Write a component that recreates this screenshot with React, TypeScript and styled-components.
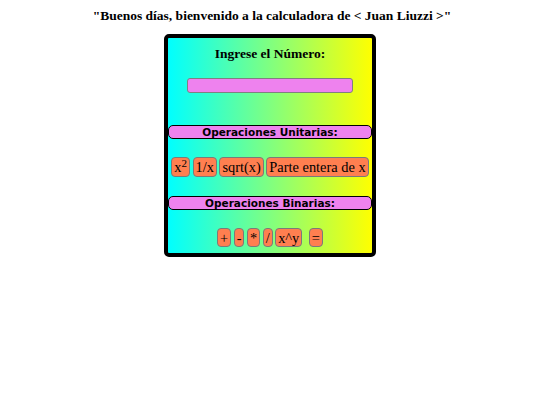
import * as React from 'react';
import styled, { createGlobalStyle } from 'styled-components';

const GlobalStyle = createGlobalStyle`
  html, body {
    margin: 0;
    padding: 0;
    background: #ffffff;
  }
  body {
    font-family: "Liberation Serif", "Times New Roman", serif;
  }
`;

const Page = styled.div`
  display: flex;
  flex-direction: column;
  align-items: center;
  padding-top: 8px;
`;

const Greeting = styled.h3`
  margin: 0;
  font-size: 13.5px;
  line-height: 16px;
  font-weight: bold;
  color: #000;
  transform: translateX(2px);
`;

const Card = styled.div`
  margin-top: 10px;
  width: 204px;
  height: 215px;
  border: 4px solid #000;
  border-radius: 5px;
  background: linear-gradient(to right, #00ffff, #80ff80, #ffff00);
  display: flex;
  flex-direction: column;
  align-items: center;
`;

const Title = styled.div`
  margin-top: 8px;
  font-size: 13.5px;
  line-height: 16px;
  font-weight: bold;
  color: #000;
`;

const NumberInput = styled.input`
  box-sizing: border-box;
  margin: 16px 0 0;
  width: 166px;
  height: 15px;
  padding: 0 4px;
  border: 1px solid #808080;
  border-radius: 3px;
  background: #ee82ee;
  outline: none;
`;

const SectionBar = styled.div<{ $top: number }>`
  box-sizing: border-box;
  margin-top: ${p => p.$top}px;
  width: 100%;
  height: 14px;
  border: 1px solid #000;
  border-radius: 5px;
  background: #ee82ee;
  font-family: "DejaVu Sans", Verdana, sans-serif;
  font-size: 10.5px;
  font-weight: bold;
  line-height: 12px;
  text-align: center;
  color: #000;
`;

const ButtonRow = styled.div<{ $top: number }>`
  margin-top: ${p => p.$top}px;
  display: flex;
  gap: 2.5px;
`;

const OpButton = styled.button<{ $gapBefore?: number; $h?: number }>`
  box-sizing: border-box;
  height: ${p => p.$h ?? 20}px;
  margin: 0 0 0 ${p => p.$gapBefore ?? 0}px;
  padding: 0 2px;
  border: 1px solid #7a7a7a;
  border-radius: 4px;
  background: #ff7f50;
  font-family: "Liberation Serif", "Times New Roman", serif;
  font-size: 14.4px;
  line-height: 16px;
  color: #000;
  cursor: pointer;

  sup {
    font-size: 11px;
    line-height: 0;
    vertical-align: 5px;
  }
`;

const unary = ['1/x', 'sqrt(x)', 'Parte entera de x'];
const binary = ['+', '-', '*', '/', 'x^y'];

function App() {
  const [value, setValue] = React.useState('');

  return (
    <Page>
      <GlobalStyle />
      <Greeting>"Buenos días, bienvenido a la calculadora de &lt; Juan Liuzzi &gt;"</Greeting>
      <Card>
        <Title>Ingrese el Número:</Title>
        <NumberInput value={value} onChange={e => setValue(e.target.value)} />
        <SectionBar $top={32}>Operaciones Unitarias:</SectionBar>
        <ButtonRow $top={18}>
          <OpButton>
            x<sup>2</sup>
          </OpButton>
          {unary.map(op => (
            <OpButton key={op}>{op}</OpButton>
          ))}
        </ButtonRow>
        <SectionBar $top={19}>Operaciones Binarias:</SectionBar>
        <ButtonRow $top={18}>
          {binary.map(op => (
            <OpButton key={op} $h={19}>
              {op}
            </OpButton>
          ))}
          <OpButton $h={19} $gapBefore={4}>
            =
          </OpButton>
        </ButtonRow>
      </Card>
    </Page>
  );
}

export default App;
